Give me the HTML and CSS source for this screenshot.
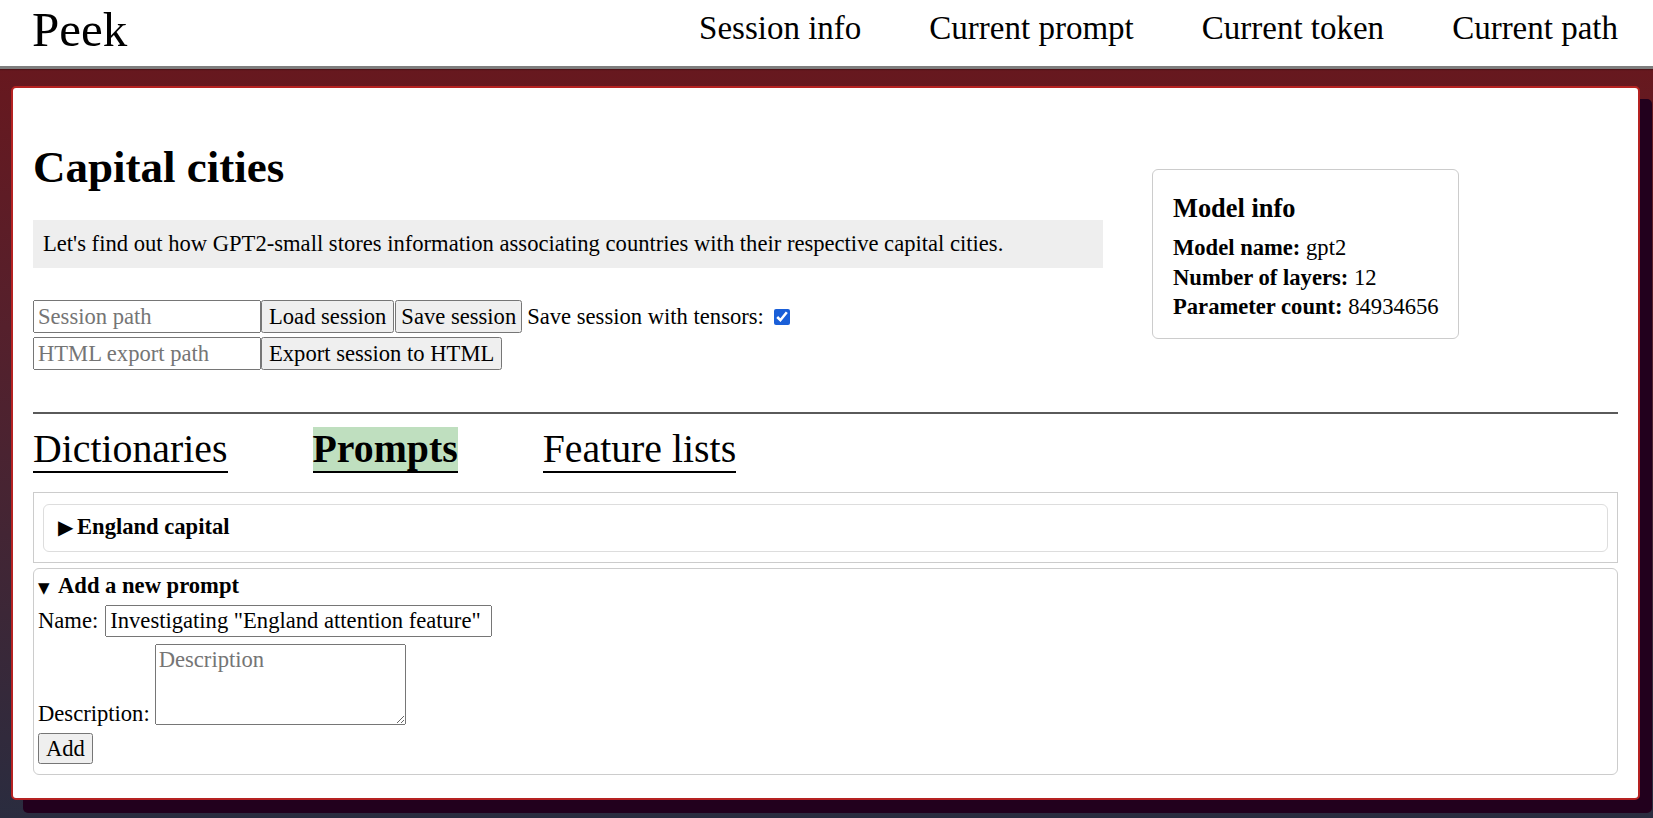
FILE: index.html
```html
<!DOCTYPE html>
<html lang="en">
<head>
<meta charset="utf-8">
<title>Peek</title>
<link rel="stylesheet" href="styles.css">
</head>
<body>
<header class="topbar">
  <div class="brand">Peek</div>
  <nav class="nav">
    <span class="nav-item">Session info</span>
    <span class="nav-item">Current prompt</span>
    <span class="nav-item">Current token</span>
    <span class="nav-item">Current path</span>
  </nav>
</header>
<main class="page">
  <section class="card">
    <div class="top">
      <div class="left">
        <h1 class="title">Capital cities</h1>
        <p class="desc">Let's find out how GPT2-small stores information associating countries with their respective capital cities.</p>
        <div class="controls">
          <div class="row">
            <input class="path" type="text" placeholder="Session path">
            <button class="btn">Load session</button>
            <button class="btn">Save session</button>
            <span class="tensors">Save session with tensors:</span>
            <input class="check" type="checkbox" checked>
          </div>
          <div class="row">
            <input class="path" type="text" placeholder="HTML export path">
            <button class="btn">Export session to HTML</button>
          </div>
        </div>
      </div>
      <aside class="model-info">
        <h3 class="mi-title">Model info</h3>
        <div class="mi-line"><b>Model name:</b> gpt2</div>
        <div class="mi-line"><b>Number of layers:</b> 12</div>
        <div class="mi-line"><b>Parameter count:</b> 84934656</div>
      </aside>
    </div>
    <hr class="divider">
    <nav class="tabs">
      <span class="tab">Dictionaries</span>
      <span class="tab active">Prompts</span>
      <span class="tab">Feature lists</span>
    </nav>
    <div class="prompts">
      <details class="prompt">
        <summary class="prompt-summary"><span class="tri">▶</span>England capital</summary>
      </details>
    </div>
    <details class="add" open>
      <summary class="add-summary"><span class="tri-down">▼</span>Add a new prompt</summary>
      <div class="field name-field">Name: <input class="name-input" type="text" value='Investigating "England attention feature"'></div>
      <div class="field desc-field"><span class="desc-label">Description:</span><textarea class="desc-input" placeholder="Description"></textarea></div>
      <button class="btn add-btn">Add</button>
    </details>
  </section>
</main>
</body>
</html>
```

FILE: styles.css
```css
html, body {
  margin: 0;
  padding: 0;
}

body {
  font-family: "Liberation Serif", "Times New Roman", serif;
  font-size: 22.6px;
  color: #000;
  min-height: 100vh;
  background: linear-gradient(180deg, #6c161b 0%, #55202c 40%, #2a2c3f 100%);
}

.topbar {
  background: #fff;
  height: 66px;
  border-bottom: 3px solid #7e7e7e;
  box-shadow: 0 1px 1px rgba(0, 0, 0, 0.25);
  display: flex;
  justify-content: space-between;
  align-items: flex-start;
  padding: 0 35px 0 32px;
}

.brand {
  font-size: 49px;
  margin-top: 1px;
}

.nav {
  display: flex;
  gap: 68px;
  font-size: 33px;
  margin-top: 10px;
}

.page {
  padding: 17px 13px 18px 11px;
}

.card {
  background: #fff;
  border: 2px solid #b52222;
  border-radius: 5px;
  box-shadow: 12px 13px 0 #22001d;
  padding: 20px;
}

.top {
  display: flex;
  align-items: flex-start;
}

.left {
  width: 1070px;
}

.title {
  font-size: 45px;
  font-weight: bold;
  margin: 33px 0 27px;
}

.desc {
  margin: 0;
  background: #eeeeee;
  padding: 11px 10px;
  height: 26px;
}

.controls {
  margin-top: 32px;
  display: flex;
  flex-direction: column;
  gap: 4px;
}

.row {
  display: flex;
  align-items: center;
  height: 33px;
}

.path {
  box-sizing: border-box;
  width: 228px;
  height: 33px;
  font: 22.6px "Liberation Serif", "Times New Roman", serif;
  margin: 0;
  padding: 1px 3px;
}

.btn {
  font: 22.6px "Liberation Serif", "Times New Roman", serif;
  margin: 0;
  box-sizing: border-box;
  height: 33px;
  padding: 1px 6px;
}

.row .btn + .btn {
  margin-left: 1px;
  padding: 1px 4px;
}

.tensors {
  margin-left: 5px;
}

.check {
  width: 16px;
  height: 16px;
  margin: 0 0 0 10px;
  accent-color: #1a5fd8;
}

.model-info {
  margin-left: 49px;
  margin-top: 61px;
  width: 307px;
  box-sizing: border-box;
  border: 1px solid #cccccc;
  border-radius: 6px;
  padding: 23px 12px 16px 20px;
  white-space: nowrap;
}

.mi-title {
  font-size: 26.4px;
  line-height: 1.15;
  margin: 0 0 10px;
}

.mi-line {
  line-height: 29.5px;
}

.divider {
  border: 0;
  border-top: 2px solid #5a5a5a;
  margin: 42px 0 0;
  height: 0;
}

.tabs {
  display: flex;
  gap: 85px;
  margin-top: 13px;
  font-size: 39.8px;
}

.tab {
  border-bottom: 2px solid #000;
  line-height: 44px;
}

.tab.active {
  background: #bfdfbf;
  font-weight: bold;
}

.prompts {
  margin-top: 19px;
  border: 1px solid #cccccc;
  padding: 11px 9px 10px;
}

.prompt {
  border: 1px solid #dddddd;
  border-radius: 6px;
  padding: 9px 14px 11px;
}

.prompt-summary {
  list-style: none;
  font-weight: bold;
  cursor: pointer;
}

.prompt-summary::-webkit-details-marker {
  display: none;
}

.tri {
  font-family: "DejaVu Sans", sans-serif;
  font-size: 20px;
  display: inline-block;
  width: 19px;
}

.add {
  margin-top: 5px;
  margin-bottom: 3px;
  border: 1px solid #cccccc;
  border-radius: 6px;
  padding: 4px;
}

.add-summary {
  list-style: none;
  font-weight: bold;
  cursor: pointer;
}

.add-summary::-webkit-details-marker {
  display: none;
}

.tri-down {
  font-family: "DejaVu Sans", sans-serif;
  font-size: 15px;
  display: inline-block;
  width: 20px;
}

.field {
  display: flex;
}

.name-field {
  margin-top: 6px;
  align-items: baseline;
  gap: 7px;
}

.name-input {
  box-sizing: border-box;
  width: 387px;
  height: 32px;
  font: 22.6px "Liberation Serif", "Times New Roman", serif;
  margin: 0;
  padding: 1px 3px;
}

.desc-field {
  margin-top: 7px;
  align-items: flex-end;
  gap: 5px;
}

.desc-label {
  margin-bottom: -2px;
}

.desc-input {
  box-sizing: border-box;
  width: 251px;
  height: 81px;
  font: 22.6px "Liberation Serif", "Times New Roman", serif;
  margin: 0;
  padding: 2px 3px;
}

.add-btn {
  display: block;
  margin-top: 8px;
  margin-bottom: 6px;
  height: 31px;
  padding: 0 6px;
}
```
